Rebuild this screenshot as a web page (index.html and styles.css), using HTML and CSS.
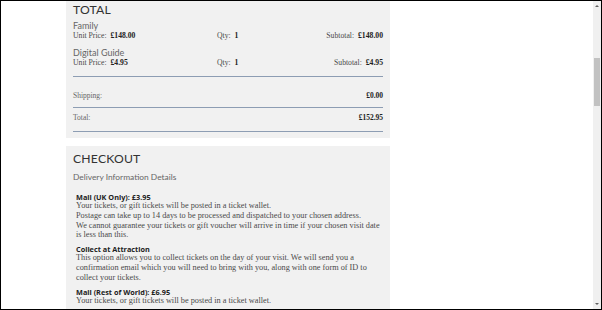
FILE: index.html
```html
<!DOCTYPE html>
<html lang="en">
<head>
    <meta charset="UTF-8">
    <title>Basket</title>
    <link rel="stylesheet" href="styles.css">
</head>
<body>
    <div class="frame">
        <div class="viewport">
            <section class="panel total-panel">
                <h2>TOTAL</h2>
                <div class="items">
                    <div class="item">
                        <div class="item-name">Family</div>
                        <div class="item-row">
                            <span>Unit Price: <b>£148.00</b></span>
                            <span>Qty: <b>1</b></span>
                            <span class="subtotal">Subtotal: <b>£148.00</b></span>
                        </div>
                    </div>
                    <div class="item">
                        <div class="item-name">Digital Guide</div>
                        <div class="item-row">
                            <span>Unit Price: <b>£4.95</b></span>
                            <span>Qty: <b>1</b></span>
                            <span class="subtotal">Subtotal: <b>£4.95</b></span>
                        </div>
                    </div>
                </div>
                <div class="summary-row shipping">
                    <span>Shipping:</span>
                    <b>£0.00</b>
                </div>
                <div class="summary-row grand">
                    <span>Total:</span>
                    <b>£152.95</b>
                </div>
            </section>

            <section class="panel checkout-panel">
                <h2>CHECKOUT</h2>
                <div class="subheading">Delivery Information Details</div>
                <div class="delivery-option">
                    <h4>Mail (UK Only): £3.95</h4>
                    <p>Your tickets, or gift tickets will be posted in a ticket wallet.<br>
                    Postage can take up to 14 days to be processed and dispatched to your chosen address.<br>
                    We cannot guarantee your tickets or gift voucher will arrive in time if your chosen visit date is less than this.</p>
                </div>
                <div class="delivery-option">
                    <h4>Collect at Attraction</h4>
                    <p>This option allows you to collect tickets on the day of your visit. We will send you a confirmation email which you will need to bring with you, along with one form of ID to collect your tickets.</p>
                </div>
                <div class="delivery-option">
                    <h4>Mail (Rest of World): £6.95</h4>
                    <p>Your tickets, or gift tickets will be posted in a ticket wallet.</p>
                </div>
            </section>
        </div>

        <div class="scrollbar">
            <div class="arrow-up"></div>
            <div class="thumb"></div>
            <div class="track-rest"></div>
            <div class="arrow-down"></div>
        </div>
    </div>
</body>
</html>
```

FILE: styles.css
```css
:root {
    --panel-bg: #f1f1f1;
    --heading-color: #333;
    --muted-color: #666;
    --text-color: #4a4a4a;
    --rule-color: #8d9db3;
}

* {
    margin: 0;
    padding: 0;
    box-sizing: border-box;
}

html, body {
    height: 310px;
    overflow: hidden;
    background: #fff;
}

.frame {
    height: 310px;
    border: 1px solid #000;
    display: flex;
}

.viewport {
    flex: 1;
    overflow: hidden;
}

/* Panels */
.panel {
    width: 324px;
    margin-left: 65px;
    background-color: var(--panel-bg);
    padding: 0 7px;
}

.panel h2 {
    font-family: Lato, "Open Sans", sans-serif;
    font-weight: 400;
    font-size: 12.2px;
    line-height: 14px;
    color: var(--heading-color);
    letter-spacing: 0.2px;
}

.total-panel {
    padding-top: 2px;
    padding-bottom: 6px;
}

.items {
    border-bottom: 1px solid var(--rule-color);
    padding-bottom: 9px;
}

.item-name {
    font-family: Lato, "Open Sans", sans-serif;
    font-size: 9px;
    line-height: 10px;
    color: var(--muted-color);
}

.item:first-child .item-name {
    margin-top: 4px;
}

.item + .item {
    margin-top: 8px;
}

.item-row {
    display: grid;
    grid-template-columns: 144px 1fr auto;
    font-family: "Liberation Serif", serif;
    font-size: 7.7px;
    line-height: 9px;
    color: var(--text-color);
}

.item-row b,
.summary-row b {
    color: #222;
    margin-left: 2px;
}

.summary-row {
    display: flex;
    justify-content: space-between;
    font-family: "Liberation Serif", serif;
    font-size: 7.5px;
    line-height: 10px;
    color: var(--muted-color);
    border-bottom: 1px solid var(--rule-color);
}

.shipping {
    padding: 14px 0 6px;
}

.grand {
    padding: 5px 0 8px;
}

/* Checkout */
.checkout-panel {
    margin-top: 8px;
    padding-top: 6px;
    padding-bottom: 10px;
}

.subheading {
    font-family: Lato, "Open Sans", sans-serif;
    font-size: 8.4px;
    line-height: 10px;
    color: var(--muted-color);
    margin-top: 6px;
    margin-bottom: 11px;
}

.delivery-option {
    padding-left: 3px;
}

.delivery-option + .delivery-option {
    margin-top: 5px;
}

.delivery-option h4 {
    font-family: "Open Sans", Lato, sans-serif;
    font-weight: 700;
    font-size: 7.3px;
    line-height: 8px;
    color: #222;
}

.delivery-option p {
    font-family: "Liberation Serif", serif;
    font-size: 8.25px;
    line-height: 9.8px;
    color: var(--text-color);
}

/* Fake window scrollbar */
.scrollbar {
    width: 8px;
    background: #f0f0f0;
    display: flex;
    flex-direction: column;
    align-items: center;
}

.arrow-up {
    margin-top: 4px;
    border-left: 2px solid transparent;
    border-right: 2px solid transparent;
    border-bottom: 2px solid #606060;
}

.thumb {
    width: 6px;
    height: 48px;
    margin-top: 51px;
    background: #c2c2c2;
}

.track-rest {
    flex: 1;
}

.arrow-down {
    margin-bottom: 4px;
    border-left: 2px solid transparent;
    border-right: 2px solid transparent;
    border-top: 2px solid #606060;
}
```
